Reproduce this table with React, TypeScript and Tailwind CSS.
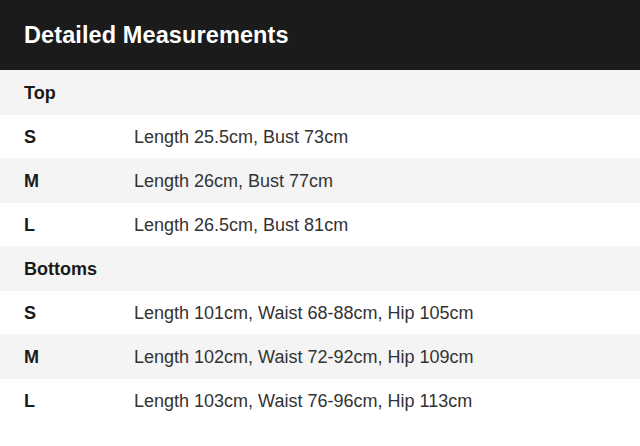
import React from "react";

type Row = { label: string; value?: string; section?: boolean };

const rows: Row[] = [
  { label: "Top", section: true },
  { label: "S", value: "Length 25.5cm, Bust 73cm" },
  { label: "M", value: "Length 26cm, Bust 77cm" },
  { label: "L", value: "Length 26.5cm, Bust 81cm" },
  { label: "Bottoms", section: true },
  { label: "S", value: "Length 101cm, Waist 68-88cm, Hip 105cm" },
  { label: "M", value: "Length 102cm, Waist 72-92cm, Hip 109cm" },
  { label: "L", value: "Length 103cm, Waist 76-96cm, Hip 113cm" },
];

export default function App() {
  return (
    <div
      className="w-[640px] h-[446px] bg-white flex flex-col"
      style={{ fontFamily: '"Liberation Sans", Arial, sans-serif' }}
    >
      <div className="h-[70px] bg-[#1b1b1b] flex items-center px-6 pt-[2px]">
        <h1 className="text-[23.5px] font-bold text-white tracking-[0.1px]">Detailed Measurements</h1>
      </div>
      {rows.map((r, i) => (
        <div
          key={i}
          className={
            i % 2 === 0
              ? "h-[45px] bg-[#f4f4f4] flex items-center pl-6 pt-[2px] text-[18px]"
              : "h-[43px] bg-white flex items-center pl-6 pt-[2px] text-[18px]"
          }
        >
          <div className="w-[110px] font-bold text-[#1a1a1a]">{r.label}</div>
          {r.value && <div className="text-[#333333]">{r.value}</div>}
        </div>
      ))}
    </div>
  );
}
